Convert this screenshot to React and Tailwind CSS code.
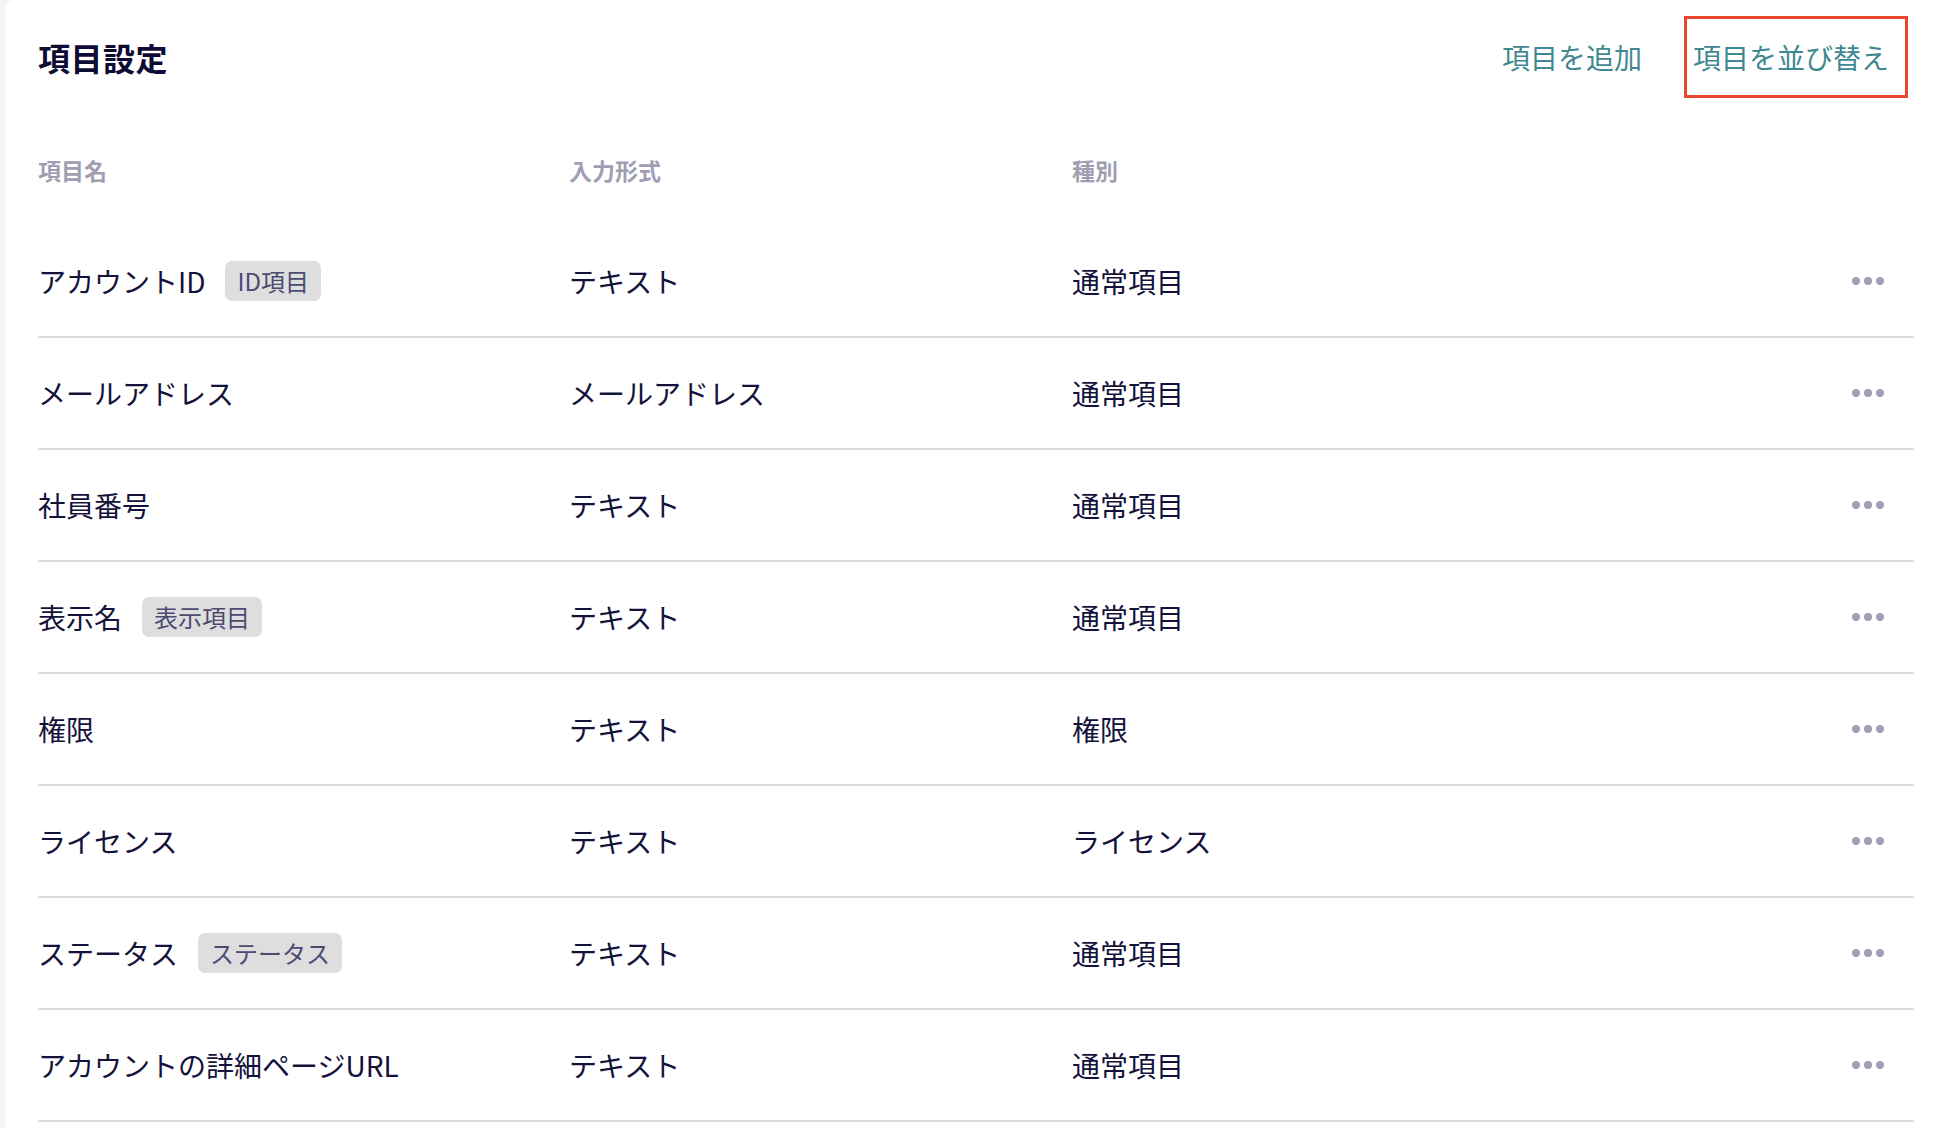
import React from "react";

const rows = [
  { name: "アカウントID", badge: "ID項目", type: "テキスト", kind: "通常項目" },
  { name: "メールアドレス", type: "メールアドレス", kind: "通常項目" },
  { name: "社員番号", type: "テキスト", kind: "通常項目" },
  { name: "表示名", badge: "表示項目", type: "テキスト", kind: "通常項目" },
  { name: "権限", type: "テキスト", kind: "権限" },
  { name: "ライセンス", type: "テキスト", kind: "ライセンス" },
  { name: "ステータス", badge: "ステータス", type: "テキスト", kind: "通常項目" },
  { name: "アカウントの詳細ページURL", type: "テキスト", kind: "通常項目" },
];

function Dots() {
  return (
    <svg width="32" height="8" viewBox="0 0 32 8" className="block">
      <circle cx="4" cy="4" r="4" fill="#a09fb7" />
      <circle cx="16" cy="4" r="4" fill="#a09fb7" />
      <circle cx="28" cy="4" r="4" fill="#a09fb7" />
    </svg>
  );
}

export default function App() {
  return (
    <div className="min-h-screen bg-[#f5f5f5] font-['Noto_Sans_CJK_JP','Noto_Sans',sans-serif]">
      <div className="ml-[6px] min-h-screen bg-white rounded-tl-lg px-8">
        <div className="flex h-[114px] items-center justify-between pr-[6px]">
          <h1 className="text-[32px] font-bold leading-none text-[#0e0b35] tracking-[0.5px]">項目設定</h1>
          <div className="flex items-center">
            <button className="text-[28px] leading-none text-[#3f8890]">項目を追加</button>
            <button className="ml-[42px] flex h-[82px] items-center border-[3px] border-[#e8472e] pl-[6px] pr-[16px] text-[28px] leading-none text-[#3f8890]">
              項目を並び替え
            </button>
          </div>
        </div>
        <div className="grid h-[112px] grid-cols-[531px_503px_1fr] items-center text-[23px] font-bold text-[#9f9eb2]">
          <div>項目名</div>
          <div>入力形式</div>
          <div>種別</div>
        </div>
        {rows.map((r) => (
          <div
            key={r.name}
            className="grid h-[112px] grid-cols-[531px_503px_1fr_auto] items-center border-b-2 border-[#dcdcdc] text-[28px] text-[#14123a]"
          >
            <div className="flex items-center">
              <span>{r.name}</span>
              {r.badge && (
                <span className="ml-[20px] flex h-[40px] items-center rounded-[7px] bg-[#dedede] px-[12px] text-[24px] text-[#4d4a72]">
                  {r.badge}
                </span>
              )}
            </div>
            <div>{r.type}</div>
            <div>{r.kind}</div>
            <div className="mr-[30px]">
              <Dots />
            </div>
          </div>
        ))}
      </div>
    </div>
  );
}
